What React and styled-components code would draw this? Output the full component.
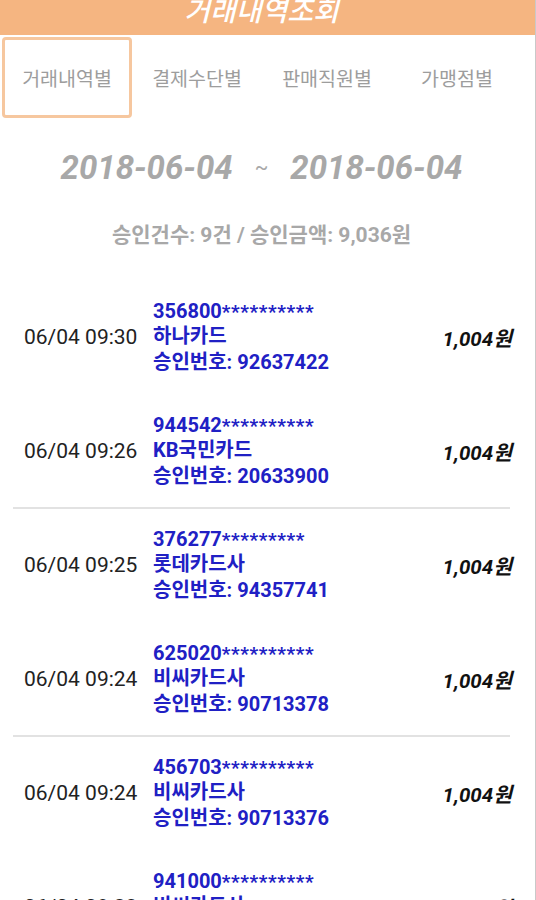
import { useState } from 'react';
import styled, { createGlobalStyle } from 'styled-components';

const GlobalStyle = createGlobalStyle`
  body {
    margin: 0;
    background: #fff;
    font-family: Roboto, "Noto Sans CJK KR", sans-serif;
  }
`;

const Page = styled.div`
  width: 536px;
  height: 900px;
  box-sizing: border-box;
  border-right: 1px solid #c9c9c9;
  overflow: hidden;
  background: #fff;
`;

const Header = styled.div`
  height: 35px;
  background: #f5b581;
  display: flex;
  align-items: flex-end;
  justify-content: center;
  padding-bottom: 9px;
  box-sizing: border-box;
  overflow: hidden;
`;

const Title = styled.div`
  color: #fff;
  font-size: 28px;
  font-style: italic;
  font-weight: 500;
  line-height: 1;
  margin-left: -12px;
`;

const Content = styled.div`
  width: 523px;
`;

const Tabs = styled.div`
  display: flex;
  padding: 2px 0 0 2px;
`;

const Tab = styled.div`
  width: 130px;
  height: 81px;
  box-sizing: border-box;
  display: flex;
  align-items: center;
  justify-content: center;
  font-size: 19.5px;
  color: #9d9d9d;
  border: 3px solid ${props => props.active ? '#f6c79f' : 'transparent'};
  border-radius: 4px;
  cursor: pointer;
`;

const DateRow = styled.div`
  display: flex;
  justify-content: center;
  align-items: center;
  margin-top: 30px;
  height: 38px;
  color: #a8a8a8;
`;

const DateText = styled.span`
  font-size: 33px;
  font-weight: 700;
  font-style: italic;
`;

const Tilde = styled.span`
  font-size: 20px;
  margin: 0 22px;
`;

const Summary = styled.div`
  text-align: center;
  margin-top: 36px;
  font-size: 21px;
  font-weight: 700;
  color: #a8a8a8;
  line-height: 26px;
`;

const List = styled.div`
  margin-top: 33px;
`;

const Row = styled.div`
  height: 112px;
  display: flex;
  align-items: center;
  padding-right: 11px;
`;

const Divider = styled.div`
  height: 2px;
  margin: 0 13px;
  background: #e2e2e2;
`;

const Gap = styled.div`
  height: 2px;
`;

const Time = styled.div`
  width: 129px;
  padding-left: 24px;
  font-size: 21px;
  color: #222;
`;

const Card = styled.div`
  flex: 1;
  color: #2020c4;
  font-size: 20px;
  font-weight: 700;
  line-height: 25.5px;
`;

const Stars = styled.span`
  font-size: 19px;
  letter-spacing: 0.6px;
`;

const Amount = styled.div`
  font-size: 20.5px;
  font-weight: 700;
  font-style: italic;
  color: #111;
`;

const tabs = ['거래내역별', '결제수단별', '판매직원별', '가맹점별'];

const rows = [
  { time: '06/04 09:30', bin: '356800', stars: 10, card: '하나카드', no: '92637422' },
  { time: '06/04 09:26', bin: '944542', stars: 10, card: 'KB국민카드', no: '20633900', divider: true },
  { time: '06/04 09:25', bin: '376277', stars: 9, card: '롯데카드사', no: '94357741' },
  { time: '06/04 09:24', bin: '625020', stars: 10, card: '비씨카드사', no: '90713378', divider: true },
  { time: '06/04 09:24', bin: '456703', stars: 10, card: '비씨카드사', no: '90713376' },
  { time: '06/04 09:23', bin: '941000', stars: 10, card: '비씨카드사', no: '90713371' },
];

const App = () => {
  const [active, setActive] = useState(0);

  return (
    <Page>
      <GlobalStyle />
      <Header>
        <Title>거래내역조회</Title>
      </Header>
      <Content>
        <Tabs>
          {tabs.map((t, i) => (
            <Tab key={t} active={i === active} onClick={() => setActive(i)}>{t}</Tab>
          ))}
        </Tabs>
        <DateRow>
          <DateText>2018-06-04</DateText>
          <Tilde>~</Tilde>
          <DateText>2018-06-04</DateText>
        </DateRow>
        <Summary>승인건수: 9건 / 승인금액: 9,036원</Summary>
        <List>
          {rows.map((r, i) => (
            <div key={i}>
              <Row>
                <Time>{r.time}</Time>
                <Card>
                  <div>{r.bin}<Stars>{'*'.repeat(r.stars)}</Stars></div>
                  <div>{r.card}</div>
                  <div>승인번호: {r.no}</div>
                </Card>
                <Amount>1,004원</Amount>
              </Row>
              {r.divider ? <Divider /> : <Gap />}
            </div>
          ))}
        </List>
      </Content>
    </Page>
  );
};

export default App;
